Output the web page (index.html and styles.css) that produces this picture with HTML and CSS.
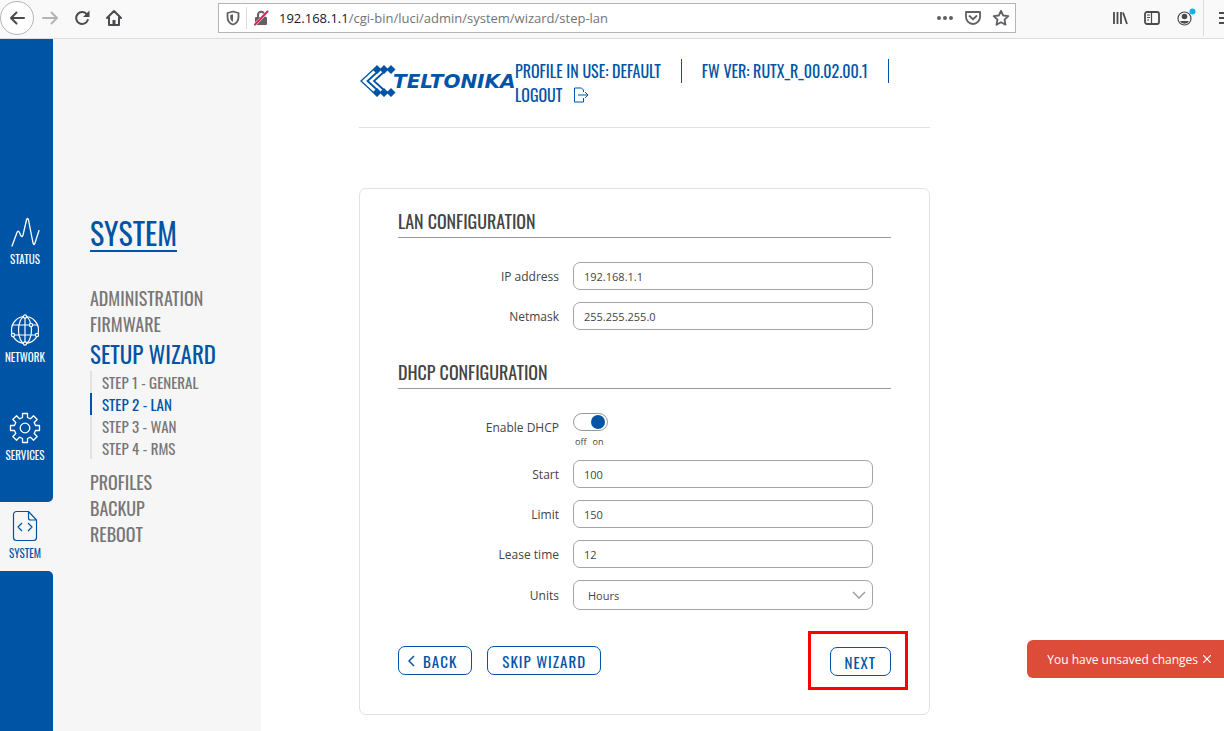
FILE: index.html
```html
<!DOCTYPE html>
<html lang="en">
<head>
  <meta charset="UTF-8" />
  <meta name="viewport" content="width=device-width, initial-scale=1" />
  <title>Teltonika - Setup Wizard</title>
  <link rel="stylesheet" href="styles.css">
</head>
<body>
  <div class="browser-bar">
    <div class="browser-nav">
      <button class="back-circle" aria-label="Back">
        <svg width="18" height="18" viewBox="0 0 18 18"><path d="M16 9H3M8.500 3.500L3 9l5.500 5.500" fill="none" stroke="#4a4a4f" stroke-width="2" stroke-linecap="round" stroke-linejoin="round"/></svg>
      </button>
      <button class="bar-btn" aria-label="Forward">
        <svg width="18" height="18" viewBox="0 0 18 18"><path d="M2 9h14M10.500 3.500L16 9l-5.500 5.500" fill="none" stroke="#b4b4b8" stroke-width="2" stroke-linecap="round" stroke-linejoin="round"/></svg>
      </button>
      <button class="bar-btn" aria-label="Reload">
        <svg width="18" height="18" viewBox="0 0 18 18"><path d="M14 5.500A6 6 0 1 0 14.800 11" fill="none" stroke="#4a4a4f" stroke-width="2" stroke-linecap="round"/><path d="M16.500 1.500v6.500h-6.500z" fill="#4a4a4f"/></svg>
      </button>
      <button class="bar-btn" aria-label="Home">
        <svg width="18" height="18" viewBox="0 0 18 18"><path d="M2 9l7-7 7 7M4 8.500V16h10V8.500" fill="none" stroke="#4a4a4f" stroke-width="2" stroke-linecap="round" stroke-linejoin="round"/><path d="M7.500 16v-5h3v5z" fill="#4a4a4f"/></svg>
      </button>
    </div>
    <div class="url-box">
      <svg class="shield" width="14" height="16" viewBox="0 0 14 16"><path d="M7 1.500L12.500 3v4c0 4-2 6.500-5.500 7.500C3.500 13.500 1.500 11 1.500 7V3z" fill="none" stroke="#5f5f64" stroke-width="1.800" stroke-linejoin="round"/><path d="M7 4.200v7.600C5 11 4.200 9.500 4.200 7V5z" fill="#5f5f64"/></svg>
      <span class="url-sep"></span>
      <svg width="16" height="16" viewBox="0 0 16 16"><path d="M5 8V5a3.200 3.200 0 0 1 6.400 0v3" fill="none" stroke="#5f5f64" stroke-width="2"/><rect x="2" y="7" width="12" height="8" rx="1" fill="#5f5f64"/><path d="M2 14.500L14.500 1.500" stroke="#fff" stroke-width="3"/><path d="M2 14.500L14.500 1.500" stroke="#d7264c" stroke-width="2" stroke-linecap="round"/></svg>
      <p class="url"><b>192.168.1.1</b>/cgi-bin/luci/admin/system/wizard/step-lan</p>
      <svg width="18" height="18" viewBox="0 0 18 18" fill="#5f5f64"><circle cx="3" cy="9" r="2"/><circle cx="9" cy="9" r="2"/><circle cx="15" cy="9" r="2"/></svg>
      <svg width="18" height="18" viewBox="0 0 18 18"><path d="M2 3h14v5a7 7 0 0 1-14 0z" fill="none" stroke="#5f5f64" stroke-width="1.800" stroke-linejoin="round"/><path d="M5.500 7L9 10.200 12.500 7" fill="none" stroke="#5f5f64" stroke-width="1.800" stroke-linecap="round"/></svg>
      <svg width="18" height="18" viewBox="0 0 18 18"><path d="M9 1.800l2.200 4.700 5.100.6-3.800 3.500 1 5.100L9 13.200l-4.500 2.500 1-5.100L1.700 7.100l5.100-.6z" fill="none" stroke="#5f5f64" stroke-width="1.800" stroke-linejoin="round"/></svg>
    </div>
    <div class="browser-tools">
      <svg width="16" height="16" viewBox="0 0 16 16"><path d="M2 2v12M5.500 2v12M9 2v12M11 2.500L15 14" fill="none" stroke="#4a4a4f" stroke-width="1.800"/></svg>
      <svg width="16" height="16" viewBox="0 0 16 16"><rect x="1" y="2" width="14" height="12" rx="2" fill="none" stroke="#4a4a4f" stroke-width="1.800"/><path d="M7.500 2v12M3 5h3M3 7.500h3M3 10h2" stroke="#4a4a4f" stroke-width="1.200"/></svg>
      <svg width="20" height="20" viewBox="0 0 20 20"><circle cx="8.500" cy="10.500" r="6.500" fill="none" stroke="#4a4a4f" stroke-width="1.200"/><circle cx="8.500" cy="8.500" r="2.800" fill="#4a4a4f"/><path d="M4 13h9a5 5 0 0 1-9 0z" fill="#4a4a4f"/><circle cx="16.500" cy="3.500" r="3" fill="#00b7e8"/></svg>
      <span class="tools-sep"></span>
    </div>
    <svg class="burger" width="5" height="16" viewBox="0 0 5 16"><path d="M0 3h5M0 8h5M0 13h5" stroke="#4a4a4f" stroke-width="2"/></svg>
  </div>

  <div class="app">
    <nav class="rail" aria-label="Sections">
      <div class="rail-top">
        <a href="#status" class="rail-item">
          <svg width="32" height="32" viewBox="0 0 32 32" fill="none" stroke="#fff" stroke-width="1.300" stroke-linecap="round" stroke-linejoin="round"><path d="M3 30L8 16.500q1-2.500 2.500 0l1 2.500q1.500 3 2.500 0L17.500 4q1-3 2 0L24 27q1 3 2 0l4-12.500"/></svg>
          <span>STATUS</span>
        </a>
        <a href="#network" class="rail-item">
          <svg width="32" height="32" viewBox="0 0 32 32" fill="none" stroke="#fff" stroke-width="1.200"><circle cx="16" cy="16" r="13.500"/><ellipse cx="16" cy="16" rx="6.500" ry="13.500"/><path d="M16 2.500v27M4 11h24M4 21h24"/><g fill="#0054a6"><circle cx="16" cy="2.500" r="1.600"/><circle cx="22" cy="11" r="1.600"/><circle cx="4" cy="21" r="1.600"/><circle cx="28" cy="21" r="1.600"/><circle cx="16" cy="29.500" r="1.600"/></g></svg>
          <span>NETWORK</span>
        </a>
        <a href="#services" class="rail-item">
          <svg width="32" height="32" viewBox="0 0 32 32" fill="none" stroke="#fff" stroke-width="1.300" stroke-linejoin="round"><path d="M13.500 1.500h5v4l3 1.300 3-3 3.700 3.700-3 3 1.300 3h4v5h-4l-1.300 3 3 3-3.700 3.700-3-3-3 1.300v4h-5v-4l-3-1.300-3 3-3.700-3.700 3-3-1.300-3h-4v-5h4l1.300-3-3-3 3.700-3.700 3 3 3-1.300z"/><circle cx="16" cy="16" r="4.800"/></svg>
          <span>SERVICES</span>
        </a>
      </div>
      <a href="#system" class="rail-item active">
        <svg width="32" height="32" viewBox="0 0 32 32" fill="none" stroke="#0054a6" stroke-width="1.200" stroke-linejoin="round"><path d="M19.500 1.500H7.500a3 3 0 0 0-3 3v23a3 3 0 0 0 3 3h17a3 3 0 0 0 3-3V10zM19.500 1.500V8q0 2 2 2h6M13 13l-4 4 4 4M19 13l4 4-4 4"/></svg>
        <span>SYSTEM</span>
      </a>
      <div class="rail-bottom"></div>
    </nav>

    <aside class="sidebar">
      <a href="#system" class="sidebar-title">SYSTEM</a>
      <ul class="menu">
        <li><a href="#administration">ADMINISTRATION</a></li>
        <li><a href="#firmware">FIRMWARE</a></li>
        <li>
          <a href="#wizard" class="current">SETUP WIZARD</a>
          <ul class="steps">
            <li><a href="#general">STEP 1 - GENERAL</a></li>
            <li><a href="#lan" class="current">STEP 2 - LAN</a></li>
            <li><a href="#wan">STEP 3 - WAN</a></li>
            <li><a href="#rms">STEP 4 - RMS</a></li>
          </ul>
        </li>
        <li><a href="#profiles">PROFILES</a></li>
        <li><a href="#backup">BACKUP</a></li>
        <li><a href="#reboot">REBOOT</a></li>
      </ul>
    </aside>

    <main class="main">
      <header class="page-header">
        <a href="#home" class="logo">
          <svg width="38" height="32" viewBox="0 0 38 32"><path d="M15 4L2 16l13 12" fill="none" stroke="#0054a6" stroke-width="1.300"/><path d="M20 5.500L8.500 16 20 26.500M26.500 5.500L15 16l11.500 10.500" fill="none" stroke="#0054a6" stroke-width="1.800"/><path d="M18 0l4.500 4.500L18 9l-4.500-4.500zM25 0l4.500 4.500L25 9l-4.500-4.500zM32 0l4.500 4.500L32 9l-4.500-4.500zM18 23l4.500 4.500L18 32l-4.500-4.500zM25 23l4.500 4.500L25 32l-4.500-4.500zM32 23l4.500 4.500L32 32l-4.500-4.500z" fill="#0054a6"/></svg>
          <span>TELTONIKA</span>
        </a>
        <div class="info">
          <span class="info-item">PROFILE IN USE: DEFAULT</span>
          <span class="info-item">FW VER: RUTX_R_00.02.00.1</span>
          <a href="#logout" class="logout">LOGOUT
            <svg width="16" height="16" viewBox="0 0 16 16" fill="none" stroke="#0054a6"><path d="M10.500 5V3L8.500 1H1.500v14h9v-4M5 8h10M12 5l3 3-3 3"/></svg>
          </a>
        </div>
      </header>

      <form class="card">
        <h2>LAN CONFIGURATION</h2>
        <div class="fields">
          <label for="ip">IP address</label>
          <input id="ip" type="text" value="192.168.1.1">
          <label for="netmask">Netmask</label>
          <input id="netmask" type="text" value="255.255.255.0">
        </div>

        <h2>DHCP CONFIGURATION</h2>
        <div class="fields">
          <label for="dhcp" class="switch-label">Enable DHCP</label>
          <div class="switch">
            <input id="dhcp" type="checkbox" checked>
            <div class="switch-text"><span>off</span><span>on</span></div>
          </div>
          <label for="start">Start</label>
          <input id="start" type="text" value="100">
          <label for="limit">Limit</label>
          <input id="limit" type="text" value="150">
          <label for="lease">Lease time</label>
          <input id="lease" type="text" value="12">
          <label for="units">Units</label>
          <div class="select">
            <select id="units">
              <option>Hours</option>
              <option>Minutes</option>
            </select>
            <svg width="14" height="8" viewBox="0 0 14 8"><path d="M1 1l6 6 6-6" fill="none" stroke="#999" stroke-width="1.300"/></svg>
          </div>
        </div>

        <div class="actions">
          <button type="button" class="btn btn-back"><svg width="7" height="12" viewBox="0 0 7 12"><path d="M6 1L1 6l5 5" fill="none" stroke="#0054a6" stroke-width="1.500"/></svg>BACK</button>
          <button type="button" class="btn">SKIP WIZARD</button>
          <div class="highlight"><button type="button" class="btn">NEXT</button></div>
        </div>
      </form>
    </main>
  </div>

  <div class="toast">
    You have unsaved changes
    <button aria-label="Close"><svg width="8" height="8" viewBox="0 0 8 8"><path d="M0 0l8 8M8 0L0 8" stroke="#fff" stroke-width="1.200"/></svg></button>
  </div>
</body>
</html>
```

FILE: styles.css
```css
* {
  margin: 0;
  padding: 0;
  box-sizing: border-box;
}
body {
  min-height: 100vh;
  display: flex;
  flex-direction: column;
  background: #fff;
  color: #444;
  font-family: 'Open Sans', sans-serif;
  font-size: 12px;
}
a {
  color: inherit;
  text-decoration: none;
}
ul {
  list-style: none;
}
button {
  background: none;
  border: 0;
  font: inherit;
  cursor: pointer;
}
svg {
  display: block;
  flex: none;
}

/* browser toolbar */
.browser-bar {
  display: flex;
  align-items: center;
  height: 39px;
  padding-bottom: 2px;
  background: #f9f9fa;
  border-bottom: 1px solid #dcdcde;
}
.browser-nav {
  display: flex;
  align-items: center;
  gap: 14px;
  flex: none;
  width: 218px;
}
.back-circle {
  display: flex;
  align-items: center;
  justify-content: center;
  width: 34px;
  height: 34px;
  border: 1px solid #b5b5b8;
  border-radius: 50%;
  background: #fff;
}
.back-circle + .bar-btn {
  margin-left: -7px;
}
.url-box {
  display: flex;
  align-items: center;
  gap: 10px;
  flex: 1;
  height: 30px;
  padding: 0 5px 0 7px;
  background: #fff;
  border: 1px solid #b5b5b8;
}
.url-sep {
  width: 1px;
  height: 22px;
  margin: 0 -4px;
  background: #ddd;
}
.url {
  flex: 1;
  color: #737377;
  font-size: 13px;
}
.url b {
  color: #18181a;
  font-weight: 400;
}
.browser-tools {
  display: flex;
  align-items: center;
  gap: 16px;
  margin-left: 96px;
}
.tools-sep {
  width: 1px;
  height: 36px;
  margin-left: -9px;
  background: #ddd;
}
.burger {
  margin-left: 15px;
}

.app {
  display: flex;
  flex: 1;
}

/* left rail */
.rail,
.sidebar-title,
.menu,
.info,
.btn,
h2 {
  font-family: 'Oswald', 'Liberation Sans Narrow', sans-serif;
  font-weight: 400;
}
.rail {
  display: flex;
  flex-direction: column;
  width: 53px;
  background: #f6f6f6;
}
.rail-top {
  display: flex;
  flex-direction: column;
  gap: 48px;
  padding: 177px 0 40px;
  background: #0054a6;
  border-radius: 0 0 5px 0;
}
.rail-item {
  display: flex;
  flex-direction: column;
  align-items: center;
  gap: 4px;
  padding-right: 3px;
  color: #fff;
  font-size: 11px;
  line-height: 14px;
}
.rail-item.active {
  padding: 8px 3px 11px 0;
  color: #0054a6;
}
.rail-bottom {
  flex: 1;
  background: #0054a6;
  border-radius: 0 5px 0 0;
}

/* menu */
.sidebar {
  flex: none;
  width: 208px;
  padding: 177px 0 0 37px;
  background: #f6f6f6;
}
.sidebar-title {
  display: inline-block;
  border-bottom: 2px solid #0054a6;
  color: #0054a6;
  font-size: 30px;
  line-height: 34px;
}
.menu {
  margin-top: 33px;
  color: #777;
  font-size: 18px;
  line-height: 26px;
}
.menu a {
  display: block;
}
.menu .current {
  color: #0054a6;
}
.menu > li > .current {
  font-size: 23px;
  line-height: 34px;
}
.steps {
  margin-bottom: 10px;
  font-size: 15px;
  line-height: 22px;
}
.steps a {
  padding-left: 10px;
  border-left: 2px solid #e2e2e2;
}
.steps .current {
  border-color: #0054a6;
}

/* content */
.main {
  flex: 1;
  padding: 0 294px 16px 98px;
}
.page-header {
  display: flex;
  align-items: center;
  height: 89px;
  border-bottom: 1px solid #e2e2e2;
  color: #0054a6;
}
.logo {
  display: flex;
  align-items: center;
  flex: none;
  width: 156px;
  margin-bottom: 4px;
  font-family: 'DejaVu Sans', sans-serif;
  font-size: 20px;
  font-style: italic;
  font-weight: 700;
}
.logo span {
  margin-left: -4px;
}
.info {
  display: flex;
  flex-wrap: wrap;
  font-size: 16px;
  line-height: 24px;
}
.info-item {
  margin-right: 20px;
  padding-right: 20px;
  border-right: 1px solid #0054a6;
}
.info-item + .info-item {
  margin-right: 0;
}
.logout {
  display: flex;
  align-items: center;
  gap: 11px;
}
.card {
  margin-top: 60px;
  padding: 16px 38px 24px;
  border: 1px solid #e2e2e2;
  border-radius: 7px;
}
h2 {
  border-bottom: 1px solid #999;
  color: #444;
  font-size: 18px;
  line-height: 32px;
}
.fields {
  display: grid;
  grid-template-columns: 161px minmax(0, 300px);
  gap: 12px 14px;
  align-items: center;
  padding: 24px 0 21px;
}
.fields + h2 {
  margin-top: 5px;
}
.fields label {
  text-align: right;
}
.fields .switch-label {
  align-self: start;
  padding-top: 6px;
}
.fields input[type="text"],
.fields select {
  width: 100%;
  height: 28px;
  padding: 0 10px;
  background: #fff;
  border: 1px solid #a5a5a5;
  border-radius: 7px;
  color: #444;
  font-family: 'Open Sans', sans-serif;
  font-size: 11px;
}
.select {
  display: grid;
  align-items: center;
}
.select select,
.select svg {
  grid-area: 1 / 1;
}
.fields .select select {
  height: 30px;
  padding: 0 14px;
  appearance: none;
}
.select svg {
  justify-self: end;
  margin-right: 7px;
  pointer-events: none;
}
.switch input {
  display: flex;
  align-items: center;
  justify-content: flex-end;
  width: 35px;
  height: 18px;
  padding: 1px 2px;
  appearance: none;
  border: 1px solid #999;
  border-radius: 9px;
}
.switch input::before {
  content: "";
  width: 14px;
  height: 14px;
  border-radius: 50%;
  background: #0054a6;
}
.switch-text {
  display: flex;
  gap: 6px;
  padding: 4px 0 0 2px;
  font-size: 9px;
  line-height: 13px;
}
.actions {
  display: flex;
  align-items: center;
  gap: 15px;
}
.btn {
  display: flex;
  align-items: center;
  height: 29px;
  padding: 0 14px;
  border: 1px solid #0054a6;
  border-radius: 7px;
  color: #0054a6;
  font-size: 15px;
  letter-spacing: 1px;
}
.btn-back {
  gap: 8px;
  padding-left: 9px;
}
.highlight {
  margin: 0 -17px 0 auto;
  padding: 13px 14px 11px 19px;
  border: 3px solid #f00;
}

.toast {
  position: fixed;
  right: 0;
  bottom: 53px;
  display: flex;
  align-items: center;
  gap: 5px;
  height: 38px;
  padding: 0 13px 0 20px;
  border-radius: 6px 0 0 6px;
  background: #dd4b39;
  color: #fff;
  font-size: 12px;
}
```
